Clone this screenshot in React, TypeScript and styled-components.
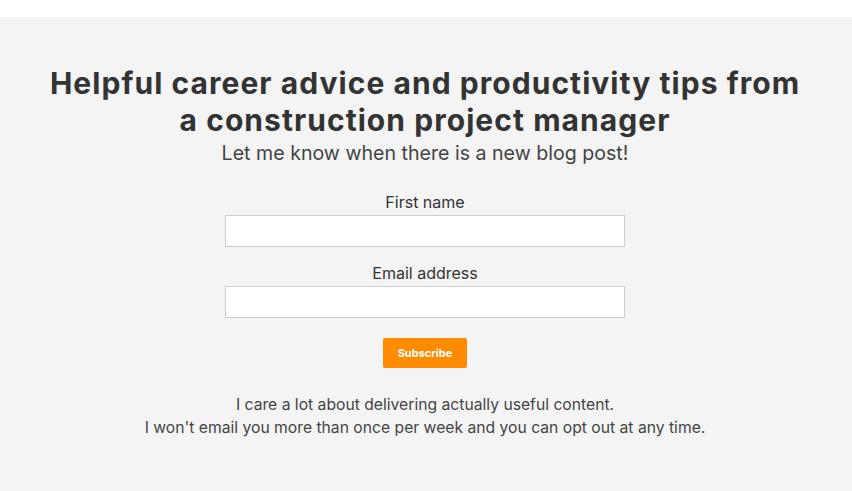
import React from "react";
import styled, { createGlobalStyle } from "styled-components";

const Global = createGlobalStyle`
  html, body { margin: 0; padding: 0; background: #ffffff; }
  body { font-family: Inter, "Noto Sans", sans-serif; color: #333333; }
  * { box-sizing: border-box; }
`;

const Page = styled.div`
  padding-top: 17px;
`;

const Section = styled.section`
  background: #f4f4f4;
  min-height: 474px;
  padding: 48px 2px 40px 0;
  display: flex;
  flex-direction: column;
  align-items: center;
  text-align: center;
`;

const Title = styled.h1`
  margin: 0;
  font-size: 30px;
  line-height: 37px;
  font-weight: 700;
  letter-spacing: 1.05px;
  color: #333333;
  max-width: 775px;
`;

const Subtitle = styled.p`
  margin: 0;
  font-size: 19.6px;
  line-height: 28px;
  font-weight: 400;
  color: #444444;
`;

const Form = styled.form`
  margin-top: 24px;
  display: flex;
  flex-direction: column;
  align-items: center;
  width: 400px;
`;

const Field = styled.div`
  display: flex;
  flex-direction: column;
  align-items: center;
  width: 100%;
  margin-bottom: 15px;
`;

const Label = styled.label`
  font-size: 16px;
  line-height: 22px;
  color: #333333;
  margin-bottom: 2px;
`;

const Input = styled.input`
  width: 100%;
  height: 32px;
  border: 1px solid #cccccc;
  background: #ffffff;
  font-size: 15px;
  padding: 4px 8px;
  outline: none;
`;

const Button = styled.button`
  margin-top: 5px;
  width: 84px;
  height: 30px;
  border: none;
  border-radius: 2px;
  background: #ff8c00;
  color: #ffffff;
  font-family: Inter, "Noto Sans", sans-serif;
  font-weight: 700;
  font-size: 11px;
  cursor: pointer;
`;

const Note = styled.p`
  margin: 25px 0 0;
  font-size: 15.7px;
  line-height: 23px;
  color: #444444;
`;

export default function App() {
  return (
    <Page>
      <Global />
      <Section>
        <Title>Helpful career advice and productivity tips from a construction project manager</Title>
        <Subtitle>Let me know when there is a new blog post!</Subtitle>
        <Form onSubmit={(e) => e.preventDefault()}>
          <Field>
            <Label htmlFor="fname">First name</Label>
            <Input id="fname" type="text" />
          </Field>
          <Field>
            <Label htmlFor="email">Email address</Label>
            <Input id="email" type="email" />
          </Field>
          <Button type="submit">Subscribe</Button>
        </Form>
        <Note>
          I care a lot about delivering actually useful content.
          <br />
          I won't email you more than once per week and you can opt out at any time.
        </Note>
      </Section>
    </Page>
  );
}
